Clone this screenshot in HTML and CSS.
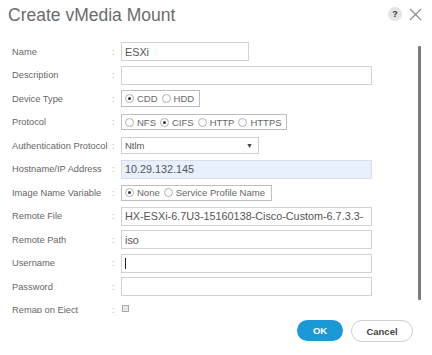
FILE: index.html
```html
<!DOCTYPE html>
<html lang="en">
<head>
    <meta charset="UTF-8">
    <title>Create vMedia Mount</title>
    <link rel="stylesheet" href="styles.css">
</head>
<body>
    <div class="dialog">
        <div class="header">
            <h1>Create vMedia Mount</h1>
            <div class="header-icons">
                <span class="help">?</span>
                <svg class="close" width="13" height="13" viewBox="0 0 13 13">
                    <path d="M1 1 L12 12 M12 1 L1 12" stroke="#8a8a8a" stroke-width="1.1" fill="none"/>
                </svg>
            </div>
        </div>

        <div class="scroll-area">
            <div class="form">
                <div class="row">
                    <label>Name</label><span class="colon">:</span>
                    <input class="field w-name" type="text" value="ESXi">
                </div>
                <div class="row">
                    <label>Description</label><span class="colon">:</span>
                    <input class="field w-full" type="text" value="">
                </div>
                <div class="row">
                    <label>Device Type</label><span class="colon">:</span>
                    <div class="radio-group w-device">
                        <span class="radio checked"></span><span class="opt">CDD</span>
                        <span class="radio"></span><span class="opt">HDD</span>
                    </div>
                </div>
                <div class="row">
                    <label>Protocol</label><span class="colon">:</span>
                    <div class="radio-group w-proto">
                        <span class="radio"></span><span class="opt">NFS</span>
                        <span class="radio checked"></span><span class="opt">CIFS</span>
                        <span class="radio"></span><span class="opt">HTTP</span>
                        <span class="radio"></span><span class="opt">HTTPS</span>
                    </div>
                </div>
                <div class="row">
                    <label>Authentication Protocol</label><span class="colon">:</span>
                    <div class="select">
                        <span>Ntlm</span>
                        <span class="arrow">&#9660;</span>
                    </div>
                </div>
                <div class="row">
                    <label>Hostname/IP Address</label><span class="colon">:</span>
                    <input class="field w-full filled" type="text" value="10.29.132.145">
                </div>
                <div class="row">
                    <label>Image Name Variable</label><span class="colon">:</span>
                    <div class="radio-group w-image">
                        <span class="radio checked"></span><span class="opt">None</span>
                        <span class="radio"></span><span class="opt">Service Profile Name</span>
                    </div>
                </div>
                <div class="row">
                    <label>Remote File</label><span class="colon">:</span>
                    <input class="field w-full" type="text" value="HX-ESXi-6.7U3-15160138-Cisco-Custom-6.7.3.3-">
                </div>
                <div class="row">
                    <label>Remote Path</label><span class="colon">:</span>
                    <input class="field w-full" type="text" value="iso">
                </div>
                <div class="row">
                    <label>Username</label><span class="colon">:</span>
                    <div class="field w-full caret-field"><span class="caret"></span></div>
                </div>
                <div class="row">
                    <label>Password</label><span class="colon">:</span>
                    <input class="field w-full" type="password" value="">
                </div>
                <div class="row">
                    <label>Remap on Eject</label><span class="colon">:</span>
                    <span class="checkbox"></span>
                </div>
            </div>
            <div class="scrollbar"></div>
        </div>

        <div class="footer">
            <button class="btn btn-ok">OK</button>
            <button class="btn btn-cancel">Cancel</button>
        </div>
    </div>
</body>
</html>
```

FILE: styles.css
```css
* {
    margin: 0;
    padding: 0;
    box-sizing: border-box;
}

body {
    font-family: 'Liberation Sans', Arial, sans-serif;
    background: #fff;
    color: #666;
}

.dialog {
    width: 432px;
    height: 355px;
    overflow: hidden;
}

.header {
    display: flex;
    justify-content: space-between;
    height: 40px;
    padding: 5px 8px 0 8px;
}

h1 {
    font-size: 17.5px;
    font-weight: normal;
    line-height: 20px;
    color: #6c6c6c;
}

.header-icons {
    display: flex;
    align-items: center;
    gap: 7px;
    height: 18px;
}

.help {
    width: 14px;
    height: 14px;
    border-radius: 50%;
    background: #e4e4e4;
    color: #333;
    font-size: 9px;
    font-weight: bold;
    line-height: 14px;
    text-align: center;
}

.close {
    margin-right: 2px;
}

.scroll-area {
    display: flex;
    height: 275px;
}

.form {
    flex: 1;
    height: 273px;
    overflow: hidden;
}

.row {
    display: flex;
    align-items: center;
    height: 23.5px;
    padding-left: 12px;
}

.row label {
    width: 100px;
    flex-shrink: 0;
    font-size: 9.3px;
    color: #666;
    white-space: nowrap;
}

.colon {
    width: 9px;
    flex-shrink: 0;
    font-size: 9px;
    color: #aaa;
}

.field {
    height: 19px;
    border: 1px solid #d2d2d2;
    background: #fff;
    font-family: 'Liberation Sans', Arial, sans-serif;
    font-size: 10.8px;
    color: #555;
    padding: 0 3px;
    outline: none;
}

.w-name { width: 128px; }
.w-full { width: 251px; }

.filled {
    background: #e8f0fe;
    border-color: #d8dde6;
}

.caret-field {
    display: flex;
    align-items: center;
}

.caret {
    width: 1px;
    height: 11px;
    background: #222;
}

.radio-group {
    display: flex;
    align-items: center;
    height: 17px;
    border: 1px solid #bdbdbd;
    padding: 0 3px;
    font-size: 9.5px;
    color: #666;
    white-space: nowrap;
}

.w-device { width: 79px; }
.w-proto { width: 166px; height: 16px; }
.w-image { width: 151px; height: 16px; }

.radio {
    flex-shrink: 0;
    width: 9px;
    height: 9px;
    border: 1px solid #b0b0b0;
    border-radius: 50%;
    margin-right: 3px;
    display: flex;
    align-items: center;
    justify-content: center;
}

.radio.checked::after {
    content: "";
    width: 3px;
    height: 3px;
    border-radius: 50%;
    background: #333;
}

.opt {
    margin-right: 4px;
}

.select {
    display: flex;
    justify-content: space-between;
    align-items: center;
    width: 138px;
    height: 17px;
    border: 1px solid #cfcfcf;
    padding: 0 5px 0 3px;
    font-size: 9.5px;
    color: #555;
}

.arrow {
    font-size: 7px;
    color: #444;
}

.checkbox {
    width: 7px;
    height: 7px;
    border: 1px solid #aaa;
    background: #e6e6e6;
    margin-left: 1px;
    margin-top: -4px;
}

.scrollbar {
    width: 3px;
    height: 254px;
    margin: 6px 11px 0 0;
    background: #7a7a7a;
    border-radius: 1px;
}

.footer {
    display: flex;
    justify-content: flex-end;
    gap: 8px;
    padding: 5px 19px 0 0;
}

.btn {
    height: 21px;
    border-radius: 11px;
    font-family: 'Liberation Sans', Arial, sans-serif;
    font-size: 9.5px;
    font-weight: bold;
    cursor: pointer;
}

.btn-ok {
    width: 46px;
    border: none;
    background: #1b98d6;
    color: #fff;
}

.btn-cancel {
    width: 62px;
    height: 22px;
    border: 1px solid #cfcfcf;
    background: #fff;
    color: #444;
}
```
